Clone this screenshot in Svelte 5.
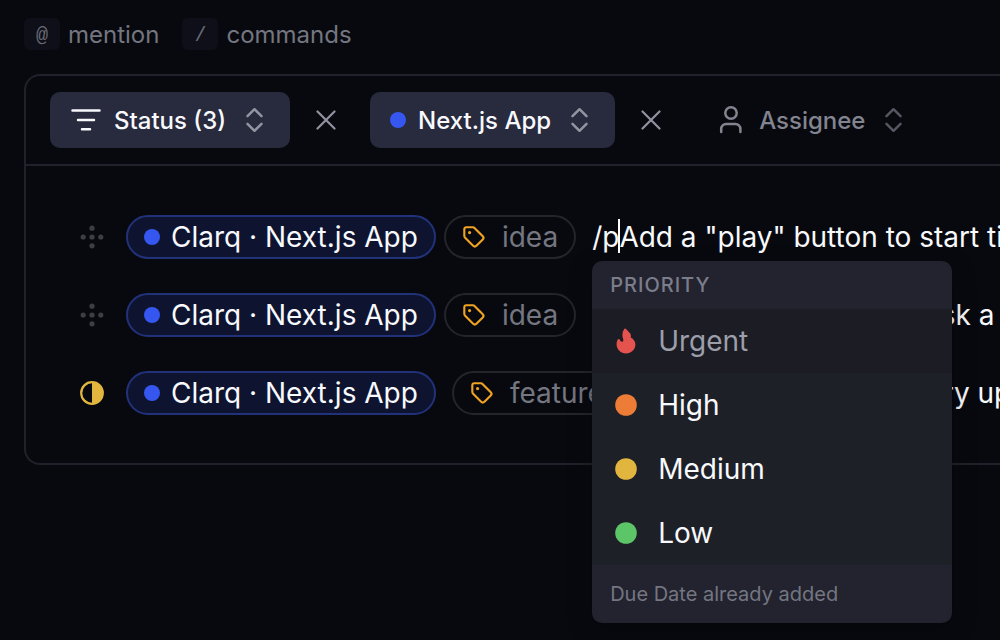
<script>
  let hints = [
    { key: '@', label: 'mention' },
    { key: '/', label: 'commands' },
  ];

  let filters = $state([
    { id: 'status', label: 'Status (3)', icon: 'filter', active: true },
    { id: 'project', label: 'Next.js App', icon: 'dot', active: true },
    { id: 'assignee', label: 'Assignee', icon: 'user', active: false },
  ]);

  let tasks = [
    { id: 1, state: 'draft', tag: 'idea', typed: '/p', text: 'Add a "play" button to start time tracking' },
    { id: 2, state: 'draft', tag: 'idea', text: 'Show daily summary on task a' },
    { id: 3, state: 'progress', tag: 'feature', text: 'Show the board on every update' },
  ];

  let priorities = ['Urgent', 'High', 'Medium', 'Low'];
  let selected = $state('Urgent');

  function clearFilter(filter) {
    filter.active = false;
  }
</script>

<div class="page">
  <div class="hints">
    {#each hints as hint}
      <span class="hint"><kbd>{hint.key}</kbd>{hint.label}</span>
    {/each}
  </div>

  <main class="panel">
    <div class="toolbar">
      {#each filters as filter (filter.id)}
        <div class="filter-group">
          <button class="filter" class:active={filter.active}>
            {#if filter.icon === 'filter'}
              <svg class="lines" width="32" height="28" viewBox="0 0 32 28" aria-hidden="true">
                <path d="M2.500 4.500h27M8 14h16M12 23.200h8" />
              </svg>
            {:else if filter.icon === 'dot'}
              <span class="dot"></span>
            {:else}
              <svg class="person" width="24" height="28" viewBox="0 0 24 28" aria-hidden="true">
                <circle cx="12" cy="7" r="5.700" />
                <path d="M2.200 26v-3a5 5 0 0 1 5-5h9.200a5 5 0 0 1 5 5v3" />
              </svg>
            {/if}
            <span>{filter.label}</span>
            <svg class="chevrons" width="18" height="28" viewBox="0 0 18 28" aria-hidden="true">
              <path d="M1.500 10.200l7-7 7 7M1.500 17.800l7 7 7-7" />
            </svg>
          </button>
          {#if filter.active}
            <button class="clear" aria-label="Clear {filter.label}" onclick={() => clearFilter(filter)}>
              <svg width="20" height="20" viewBox="0 0 20 20" aria-hidden="true">
                <path d="M1.500 1.500l17 17M18.500 1.500l-17 17" />
              </svg>
            </button>
          {/if}
        </div>
      {/each}
    </div>

    <ul class="tasks">
      {#each tasks as task (task.id)}
        <li class="task {task.state}">
          <svg class="state" width="24" height="24" viewBox="0 0 24 24" aria-hidden="true">
            {#if task.state === 'draft'}
              <circle cx="12" cy="3.200" r="2.600" />
              <circle cx="3.200" cy="12" r="2.600" />
              <circle cx="12" cy="12" r="2.600" />
              <circle cx="20.800" cy="12" r="2.600" />
              <circle cx="12" cy="20.800" r="2.600" />
            {:else}
              <circle cx="12" cy="12" r="10.800" fill="#08090f" stroke="#e2b53f" stroke-width="2.200" />
              <path d="M12 1a11 11 0 0 1 0 22z" fill="#e2b53f" />
            {/if}
          </svg>
          <span class="chip project"><span class="dot"></span>Clarq · Next.js App</span>
          <span class="chip tag">
            <svg width="24" height="24" viewBox="0 0 26 26" aria-hidden="true">
              <path class="outline" d="M2.500 4.500a2 2 0 0 1 2-2h7.200a3 3 0 0 1 2.100.9l8.700 8.700a2.500 2.500 0 0 1 0 3.500l-6.900 6.900a2.500 2.500 0 0 1-3.500 0l-8.700-8.700a3 3 0 0 1-.9-2.100z" />
              <circle cx="8.200" cy="8.200" r="1.700" />
            </svg>
            {task.tag}
          </span>
          <div class="body">
            {#if task.typed}
              <div class="text" role="textbox" aria-label="Task" tabindex="0">{task.typed}<span class="caret"></span>{task.text}</div>
              <div class="menu">
                <div class="menu-title" id="menu-title">PRIORITY</div>
                <div role="group" aria-labelledby="menu-title">
                  {#each priorities as name}
                    <button class="option {name.toLowerCase()}" class:selected={selected === name} onclick={() => (selected = name)}>
                      {#if name === 'Urgent'}
                        <svg width="24" height="26" viewBox="0 0 24 26" aria-hidden="true">
                          <path d="M10.300.900c.4-.5 1.300-.4 1.800.2 1.200 1.600 2.800 2.900 4.100 4.500.7.900.8 2.300.6 4 2.800 1.600 4.600 4 4.600 7 0 5-4 8.800-9.300 8.800S2.600 21.500 2.600 16.500c0-2.300.4-4 1.500-5.200.6-.6 1.600-.4 1.800.4.300 1.300.9 2 2 2 1.300 0 1.800-1 1.300-2.500C8.100 7.800 7.800 4.300 10.300.900z" />
                        </svg>
                      {:else}
                        <svg width="24" height="26" viewBox="0 0 24 26" aria-hidden="true">
                          <circle cx="12" cy="13" r="10.800" />
                        </svg>
                      {/if}
                      {name}
                    </button>
                  {/each}
                </div>
                <div class="menu-note">Due Date already added</div>
              </div>
            {:else}
              <div class="text">{task.text}</div>
            {/if}
          </div>
        </li>
      {/each}
    </ul>
  </main>
</div>

<style>
  :global(body) {
    background: #08090f;
  }

  .page {
    box-sizing: border-box;
    min-height: 100vh;
    padding: 16px 0 16px 24px;
    overflow: hidden;
    font-family: Inter, 'Liberation Sans', sans-serif;
    color: #f8f9fc;
    background: #08090f;
  }

  button {
    border: none;
    background: none;
    padding: 0;
    font: inherit;
    color: inherit;
    cursor: pointer;
  }

  svg {
    flex: none;
    fill: none;
    stroke-linecap: round;
    stroke-linejoin: round;
  }

  .hints {
    display: flex;
    gap: 23px;
    height: 36px;
    margin-bottom: 22px;
    font-size: 24px;
    color: #747680;
  }

  .hint {
    display: flex;
    align-items: center;
    gap: 8px;
  }

  kbd {
    box-sizing: border-box;
    width: 36px;
    height: 32px;
    padding-top: 2px;
    border-radius: 6px;
    background: #0e0f18;
    font-family: 'Liberation Mono', monospace;
    font-size: 20px;
    line-height: 32px;
    text-align: center;
    color: #686a75;
  }

  .panel {
    border: 2px solid #20212a;
    border-right: none;
    border-radius: 16px 0 0 16px;
  }

  .toolbar {
    display: flex;
    padding: 16px 24px;
    border-bottom: 2px solid #20212a;
  }

  .filter-group {
    display: flex;
    flex: none;
  }

  .filter {
    display: flex;
    align-items: center;
    height: 56px;
    padding: 0 26px 0 24px;
    border-radius: 10px;
    font-size: 24px;
    font-weight: 500;
    white-space: nowrap;
    color: #82848f;
  }

  .filter.active {
    padding-left: 20px;
    color: #f8f9fc;
    background: #282a3d;
  }

  .lines {
    margin-right: 12px;
    stroke: #f8f9fc;
    stroke-width: 2.500;
  }

  .person {
    margin-right: 16px;
    stroke: #82848f;
    stroke-width: 2.500;
  }

  .chevrons {
    margin-left: 20px;
    stroke: #555762;
    stroke-width: 2.400;
  }

  .active .chevrons {
    stroke: #9395a3;
  }

  .dot {
    flex: none;
    width: 16px;
    height: 16px;
    margin-right: 12px;
    border-radius: 50%;
    background: #3557f0;
  }

  .clear {
    display: grid;
    place-items: center;
    width: 72px;
    margin-right: 8px;
    stroke: #9193a0;
    stroke-width: 2.200;
  }

  .tasks {
    display: flex;
    flex-direction: column;
    gap: 34px;
    margin: 0;
    padding: 49px 0 48px 54px;
    list-style: none;
    font-size: 28px;
  }

  .task {
    display: flex;
    align-items: center;
    height: 44px;
    white-space: nowrap;
  }

  .state {
    margin-right: 22px;
    fill: #3d3e44;
  }

  .chip {
    display: flex;
    flex: none;
    align-items: center;
    box-sizing: border-box;
    height: 44px;
    padding: 0 16px;
    border: 2px solid #24252b;
    border-radius: 22px;
  }

  .project {
    margin-right: 8px;
    border-color: #22327a;
    background: #0e1430;
  }

  .project .dot {
    margin-right: 11px;
  }

  .progress .project {
    margin-right: 16px;
  }

  .tag {
    margin-right: 16px;
    color: #747680;
  }

  .tag svg {
    margin-right: 16px;
    fill: #f0a323;
  }

  .tag .outline {
    fill: none;
    stroke: #f0a323;
    stroke-width: 2.300;
  }

  .body {
    position: relative;
    flex: 1;
    min-width: 0;
  }

  .text {
    line-height: 44px;
    outline: none;
  }

  .caret {
    display: inline-block;
    width: 2px;
    height: 34px;
    margin: 0 -1px;
    vertical-align: -6px;
    background: #fff;
  }

  .menu {
    position: absolute;
    top: 46px;
    left: 0;
    z-index: 1;
    width: 360px;
    overflow: hidden;
    border-radius: 10px;
    background: #22232e;
    box-shadow: 0 8px 24px rgb(0 0 0 / 0.3);
  }

  .menu-title {
    padding: 1px 18px 0;
    font-size: 20px;
    font-weight: 500;
    line-height: 47px;
    letter-spacing: 1px;
    color: #7b7d8b;
  }

  .option {
    display: flex;
    align-items: center;
    gap: 20px;
    width: 100%;
    height: 64px;
    padding: 0 22px;
    background: #1e2027;
  }

  .option.selected {
    color: #9c9eaa;
    background: #1b1c24;
  }

  .urgent svg {
    fill: #e5534f;
  }

  .high svg {
    fill: #ed7d36;
  }

  .medium svg {
    fill: #e2b53f;
  }

  .low svg {
    fill: #5cc568;
  }

  .menu-note {
    padding: 0 18px;
    font-size: 20px;
    line-height: 58px;
    color: #747682;
  }
</style>
